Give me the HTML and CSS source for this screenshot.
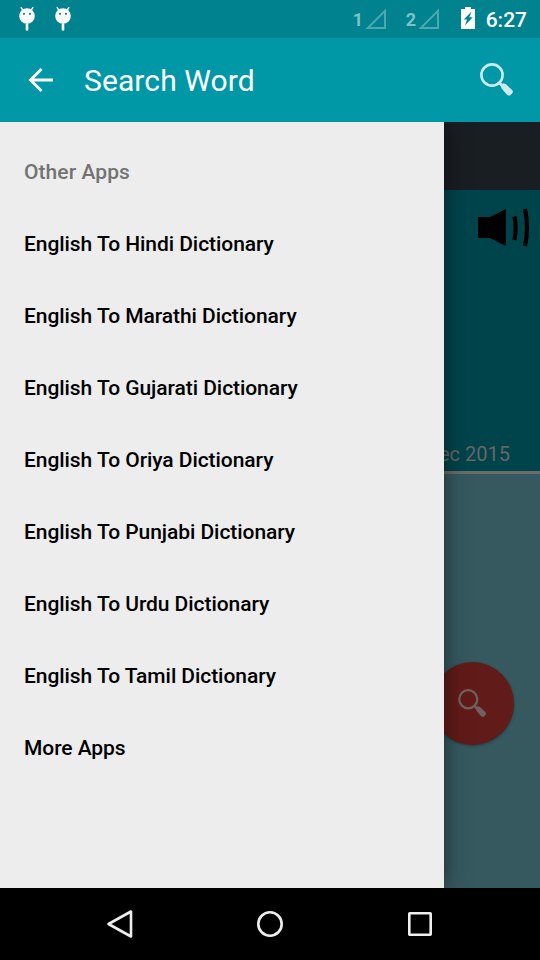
FILE: index.html
```html
<!DOCTYPE html>
<html lang="en">
<head>
<meta charset="utf-8">
<title>Search Word</title>
<link rel="stylesheet" href="styles.css">
</head>
<body>
<svg class="defs" aria-hidden="true">
  <symbol id="bot" viewBox="0 0 18 26">
    <path d="M3.2 1.6 5.4 5M14.8 1.6 12.6 5" stroke="#fff" stroke-width="1.4" stroke-linecap="round"/>
    <circle cx="9" cy="10" r="7.8" fill="#fff"/>
    <path d="M9 18.5v5" stroke="#fff" stroke-width="2.6" stroke-linecap="round"/>
    <circle cx="6" cy="7.8" r="1.1" fill="#00838f"/><circle cx="12" cy="7.8" r="1.1" fill="#00838f"/>
  </symbol>
  <symbol id="signal" viewBox="0 0 22 22">
    <path d="M2.8 20H20V2.8z" fill="none" stroke="#4da8b1" stroke-width="2"/>
  </symbol>
  <symbol id="lens" viewBox="0 0 34 34">
    <circle cx="12" cy="12" r="10.6" fill="none" stroke="currentColor" stroke-width="2.6"/>
    <path d="M19 19.5 22.5 23" stroke="currentColor" stroke-width="2.8"/>
    <path d="M20.500 22.200q1.700-.3 2.400-1.900l2.900.8 6.300 5.800q1.400 1.600.2 3.300l-1.700 1.900q-1.700 1.100-3.400-.2l-5.600-6.400z" fill="currentColor"/>
  </symbol>
</svg>
<header class="status">
  <svg class="bot"><use href="#bot"/></svg>
  <svg class="bot"><use href="#bot"/></svg>
  <span class="sim sim-first">1</span><svg class="signal"><use href="#signal"/></svg>
  <span class="sim">2</span><svg class="signal"><use href="#signal"/></svg>
  <svg class="battery" viewBox="0 0 14 22"><path fill="#fff" d="M4 0h6v2h4v20H0V2h4z"/><path fill="#00838f" d="M10.500 4.500 2.800 12.500h3.200L4 18.500l7.700-8.300H8.300z"/></svg>
  <time class="clock">6:27</time>
</header>
<nav class="appbar">
  <svg class="back" viewBox="0 0 26 26"><path d="M25 13H3M13.500 2 2.500 13l11 11" fill="none" stroke="#fff" stroke-width="2.900"/></svg>
  <h1>Search Word</h1>
  <svg class="search"><use href="#lens"/></svg>
</nav>
<main class="content">
  <div class="strip"></div>
  <section class="word">
    <svg class="speaker" viewBox="0 0 52 40"><path d="M0 9h12L28 1v37L12 30H0z"/><path d="M36.500 8.500q2.200 11.500 0 23.500M47 1q4 19 0 37" fill="none" stroke="#000" stroke-width="4.200"/></svg>
    <p class="date">ec 2015</p>
  </section>
  <section class="lower">
    <div class="fab"><svg><use href="#lens"/></svg></div>
  </section>
  <aside class="drawer">
    <h2>Other Apps</h2>
    <ul>
      <li>English To Hindi Dictionary</li>
      <li>English To Marathi Dictionary</li>
      <li>English To Gujarati Dictionary</li>
      <li>English To Oriya Dictionary</li>
      <li>English To Punjabi Dictionary</li>
      <li>English To Urdu Dictionary</li>
      <li>English To Tamil Dictionary</li>
      <li>More Apps</li>
    </ul>
  </aside>
</main>
<footer class="navbar">
  <svg viewBox="0 0 30 30"><path d="M26 2.500v25L3.500 15z"/></svg>
  <svg viewBox="0 0 30 30"><circle cx="15" cy="15" r="11.700"/></svg>
  <svg viewBox="0 0 30 30"><rect x="4.300" y="4.300" width="21.400" height="21.400" rx=".5"/></svg>
</footer>
</body>
</html>
```
FILE: styles.css
```css
* { box-sizing: border-box; margin: 0; padding: 0; }
body { width: 540px; height: 960px; display: flex; flex-direction: column; overflow: hidden; font-family: Roboto, sans-serif; }
svg { display: block; flex: none; }
.defs { position: absolute; width: 0; height: 0; }
.status { height: 38px; background: #00838f; display: flex; align-items: center; padding: 0 13px 0 18px; color: #fff; }
.bot { width: 18px; height: 26px; margin-right: 18px; }
.sim { font-size: 18px; font-weight: 700; color: #80c1c7; width: 12px; margin-left: 19px; }
.sim-first { margin-left: auto; }
.signal { width: 22px; height: 22px; }
.battery { width: 14px; height: 22px; margin: 0 11px 2px 21px; }
.clock { font-size: 21px; font-weight: 500; line-height: 38px; padding-top: 1px; }
.appbar { height: 84px; background: #0097a7; display: flex; align-items: center; padding: 0 26px 0 28px; color: #fff; }
.back { width: 26px; height: 26px; margin-bottom: 1px; }
h1 { font-size: 30px; font-weight: 400; letter-spacing: .1px; margin-left: 30px; flex: 1; line-height: 82px; padding-top: 2px; }
.search { width: 34px; height: 34px; color: #cceaed; }
.content { height: 766px; position: relative; display: flex; flex-direction: column; overflow: hidden; }
.strip { height: 68px; background: #191e22; }
.word { height: 284px; background: #00444b; border-bottom: 3px solid #6b6b6b; display: flex; flex-direction: column; align-items: flex-end; justify-content: space-between; }
.speaker { width: 52px; height: 40px; margin: 18px 10px 0 0; }
.date { color: #666; font-size: 20px; line-height: 24px; margin: 0 30px 5px 0; }
.lower { flex: 1; background: #35595f; display: flex; justify-content: flex-end; align-items: flex-start; padding: 187.500px 26.500px 0 0; }
.fab { width: 83px; height: 83px; border-radius: 50%; background: #611b18; color: #706160; display: flex; align-items: center; justify-content: center; box-shadow: 0 1px 3px rgba(0,0,0,.35); }
.fab svg { width: 29px; height: 29px; }
.drawer { position: absolute; left: 0; top: 0; width: 444px; height: 100%; background: #ededed; padding: 14px 24px; box-shadow: 0 0 22px rgba(0,0,0,.5); font-size: 21px; font-weight: 500; line-height: 72px; color: #000; }
h2 { font-size: 21px; font-weight: 500; letter-spacing: .08px; color: #737373; }
ul { list-style: none; letter-spacing: -.06px; }
.navbar { height: 72px; background: #000; display: flex; justify-content: center; align-items: center; gap: 120px; }
.navbar svg { width: 30px; height: 30px; fill: none; stroke: #eee; stroke-width: 2.6; stroke-linejoin: round; }
```
